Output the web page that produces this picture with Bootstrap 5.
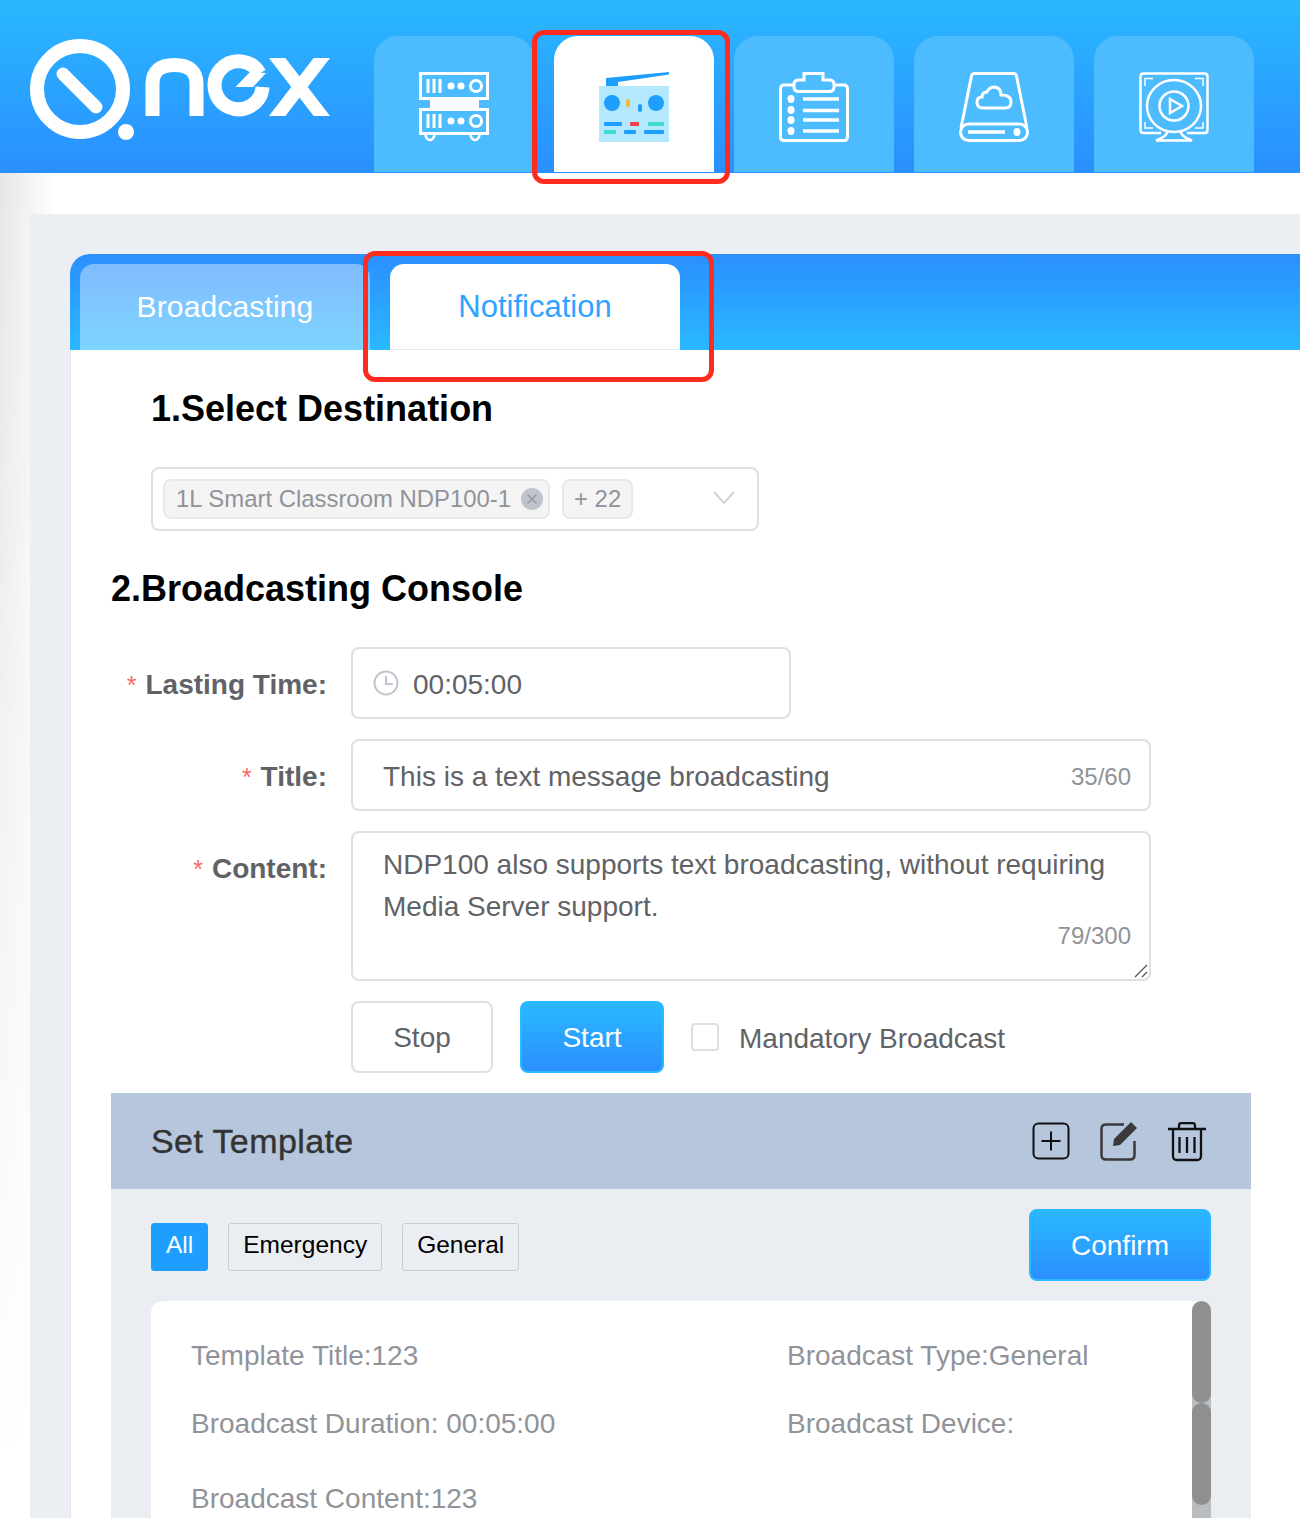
<!DOCTYPE html>
<html lang="en">
<head>
<meta charset="utf-8">
<title>Q-NEX Notification</title>
<link href="https://cdn.jsdelivr.net/npm/bootstrap@5.3.0/dist/css/bootstrap.min.css" rel="stylesheet">
<style>
html,body{height:1518px;overflow:hidden}
body{font-family:"Liberation Sans",Arial,sans-serif;background:#fff;color:#606266}
.top-bar{height:173px;background:linear-gradient(#2ab8ff,#2a8fff);padding-left:30px;position:relative}
.logo-svg{width:300px;height:106px;margin-top:39px;flex:none}
.mod-tabs{margin-left:44px;gap:20px;padding-top:36px}
.mod-tab{width:160px;height:136px;background:#4dbcff;border-radius:24px 24px 0 0;display:flex;justify-content:center;padding-top:36px}
.mod-tab.on{background:#fff}
.mod-tab svg{width:70px;height:70px}
.red-box{position:absolute;border:5px solid #fe2b1f;border-radius:12px;pointer-events:none;z-index:5}
.rb-a{left:532px;top:30px;width:198px;height:154px}
.rb-b{left:363px;top:251px;width:351px;height:131px}
.page-back{height:1345px;padding:41px 0 0 30px;position:relative;background:linear-gradient(rgba(255,255,255,0),#fff 95%),linear-gradient(90deg,#e6e6e6,#fff 55px)}
.panel{background:#ebeef3;height:1400px;padding:40px 0 0 40px;width:1400px}
.sheet{background:#fff;border-left:1px solid #e4e7ed;height:1300px;border-top-left-radius:20px}
.sheet-head{height:96px;margin-left:-1px;background:linear-gradient(#2a8fff,#2ab8ff);border-top-left-radius:20px;padding:10px 0 0 10px;gap:20px}
.sheet-tab{width:290px;height:86px;border-radius:14px 14px 0 0;line-height:86px;text-align:center}
.sheet-tab.off{background:linear-gradient(#80bbff,#7ed4ff);color:#fff;font-size:30px;letter-spacing:.15px}
.sheet-tab.on{background:#fff;color:#2ea3ff;border-bottom:1px solid #e4e7ed;font-size:31px}
.sec-head{font-weight:700;font-size:36px;line-height:44px;color:#000;margin:0}
.sec-one{padding:37px 0 0 80px}
.sel-box{width:608px;height:64px;border:2px solid #dcdfe6;border-radius:8px;margin:36px 0 0 0;padding:0 10px;gap:12px;position:relative}
.pick{height:40px;background:#f4f4f5;border:2px solid #e9e9eb;border-radius:8px;font-size:23.900px;color:#909399;padding:0 5px 0 11px;gap:10px;white-space:nowrap}
.pick-more{padding:0 10px}
.pick-x{width:22px;height:22px}
.chev{position:absolute;right:22px;top:22px;width:22px;height:14px}
.sec-two{padding:36px 0 0 40px}
.form-line{display:flex;margin-top:20px}
.form-first{margin-top:36px}
.line-lab{width:216px;height:72px;font-size:28px;font-weight:700;color:#606266;text-align:right;line-height:76px;white-space:nowrap}
.line-lab i{color:#f56c6c;font-style:normal;font-weight:400;margin-right:9px;font-size:25px}
.field{margin-left:24px;height:72px;border:2px solid #dcdfe6;border-radius:8px;font-size:28px;color:#606266;position:relative;background:#fff;white-space:nowrap}
.f-time{width:440px;padding:3px 0 0 20px;gap:14px}
.f-time svg{margin-top:-3px}
.f-title{width:800px;padding:3px 0 0 30px}
.f-body{width:800px;height:150px;padding:11px 20px 0 30px;line-height:42px;white-space:normal}
.count{position:absolute;right:18px;color:#909399;font-size:24px;line-height:28px}
.cnt-a{top:22px}
.cnt-b{top:89px}
.grip{position:absolute;right:1px;bottom:1px;width:14px;height:14px}
.act-row{margin:20px 0 0 240px;height:72px}
.act-btn{height:72px;border-radius:8px;font-size:28px;padding:2px 0 0;display:flex;align-items:center;justify-content:center}
.act-stop{width:142px;background:#fff;border:2px solid #dcdfe6;color:#606266}
.act-start{width:144px;margin-left:27px;background:linear-gradient(#2ab8ff,#2a8fff);border:2px solid #2ab8ff;color:#fff}
.tick{width:28px;height:28px;border:2px solid #dcdfe6;border-radius:4px;margin:0 20px 0 27px;background:#fff}
.tick-lab{font-size:28px;color:#606266;padding-top:3px}
.tpl{width:1140px;margin-top:20px;background:#eaedf2;height:500px}
.tpl-head{height:96px;background:#b6c7dd;padding:0 45px 0 40px}
.tpl-name{font-size:34px;letter-spacing:.4px;color:#333;-webkit-text-stroke:.4px #333}
.tpl-ico{gap:30px;padding-top:2px}
.tpl-ico svg{width:38px;height:40px;display:block}
.tpl-bar{padding:20px 40px 0;height:112px;align-items:flex-start}
.chip{height:48px;margin-top:14px;margin-right:20px;padding:0 14px 4px;border:1px solid #ccc;background:transparent;color:#000;border-radius:3px;font-size:24.500px;display:flex;align-items:center}
.chip.on{background:#1e9fff;border-color:#1e9fff;color:#fff}
.conf{width:182px;height:72px;margin-left:auto;border-radius:8px;background:linear-gradient(#2ab8ff,#2a8fff);border:2px solid #2ab8ff;color:#fff;font-size:28px;padding:2px 0 0}
.tpl-card{margin:0 40px;background:#fff;border-radius:12px;height:300px;position:relative;padding:35px 40px 0;color:#909399;font-size:28px}
.tpl-grid{display:grid;grid-template-columns:596px 1fr;row-gap:28px;line-height:40px;white-space:nowrap}
.tpl-wide{grid-column:1/3;margin-top:7px}
.rail{position:absolute;right:0;top:0;bottom:0;width:19px;background:linear-gradient(transparent 90px,#b9bdc0 90px)}
.thumb{height:102px;background:#8f8f8f;border-radius:10px}
</style>
</head>
<body>
<header class="top-bar d-flex">
  <svg class="logo-svg" viewBox="0 39 300 106" role="img" aria-label="Q-NEX logo">
    <defs><clipPath id="xc"><rect x="265" y="58" width="70" height="58"/></clipPath></defs>
    <g transform="translate(-30,0)" fill="none" stroke="#fff">
      <circle cx="80" cy="89" r="43" stroke-width="14"/>
      <line x1="63" y1="74" x2="96" y2="107" stroke-width="13" stroke-linecap="round"/>
      <circle cx="126" cy="132" r="8" fill="#fff" stroke="none"/>
      <path d="M152.500 116V84Q152.500 65 174.500 65Q196.500 65 196.500 84V116" stroke-width="14"/>
      <path d="M259.500 73.500A24 24 0 1 0 262.500 87" stroke-width="14"/>
      <path d="M235.500 87L250 72L266 73L253 87Z" fill="#fff" stroke="none"/>
      <g clip-path="url(#xc)" stroke-width="13"><line x1="271" y1="50" x2="328" y2="124"/><line x1="328" y1="50" x2="271" y2="124"/></g>
    </g>
  </svg>
  <nav class="mod-tabs d-flex">
    <div class="mod-tab">
      <svg viewBox="0 0 70 70" fill="none" stroke="#fff" stroke-width="3"><rect x="1.500" y="1.500" width="67" height="25"/><rect x="1.500" y="37.500" width="67" height="24"/><rect x="11" y="26" width="49" height="11" fill="#fff" stroke="none"/><path d="M9 7v14M15 7v14M21 7v14M9 42v14M15 42v14M21 42v14"/><circle cx="32" cy="14" r="3.500" fill="#fff" stroke="none"/><circle cx="42" cy="14" r="3.500" fill="#fff" stroke="none"/><circle cx="57" cy="14" r="5.500"/><circle cx="32" cy="49" r="3.500" fill="#fff" stroke="none"/><circle cx="42" cy="49" r="3.500" fill="#fff" stroke="none"/><circle cx="57" cy="49" r="5.500"/><path d="M6.500 62a4.500 6 0 0 0 9 0M51.500 62a4.500 6 0 0 0 9 0" stroke-width="2.500"/></svg>
    </div>
    <div class="mod-tab on">
      <svg viewBox="0 0 70 70"><path d="M7 6L70 0V2.500L19 10V14H7Z" fill="#1e9fff"/><rect y="14" width="70" height="56" fill="#b3e8ff"/><circle cx="13" cy="31" r="8" fill="#1e9fff"/><circle cx="57" cy="31" r="8" fill="#1e9fff"/><rect x="27" y="27" width="4" height="8" rx="2" fill="#f3b73c"/><rect x="39" y="32" width="4" height="8" rx="2" fill="#1e9fff"/><rect x="5" y="50" width="18" height="4" rx="1" fill="#1e9fff"/><rect x="31" y="50" width="9" height="4" rx="1" fill="#f0404a"/><rect x="49" y="50" width="16" height="4" rx="1" fill="#3fdcd0"/><rect x="5" y="58" width="12" height="4" rx="1" fill="#3fdcd0"/><rect x="25" y="58" width="12" height="4" rx="1" fill="#1e9fff"/><rect x="45" y="58" width="20" height="4" rx="1" fill="#1e9fff"/></svg>
    </div>
    <div class="mod-tab">
      <svg viewBox="0 0 70 70" fill="none" stroke="#fff" stroke-width="3"><path d="M15 13H5Q1.500 13 1.500 17V65Q1.500 68.500 5 68.500H65Q68.500 68.500 68.500 65V17Q68.500 13 65 13H55"/><path d="M25 1.500H44V8H50Q55 8 55 12V15Q55 19.500 50 19.500H20Q15 19.500 15 15V12Q15 8 20 8H25Z"/><path d="M24 27H60M24 38.500H60M24 48H60M24 59H60" stroke-width="3.500"/><g fill="#fff" stroke="none"><ellipse cx="12" cy="27" rx="3.500" ry="4"/><ellipse cx="12" cy="38" rx="3.500" ry="4"/><ellipse cx="12" cy="48" rx="3.500" ry="4"/><ellipse cx="12" cy="59" rx="3.500" ry="4"/></g></svg>
    </div>
    <div class="mod-tab">
      <svg viewBox="0 0 70 70" fill="none" stroke="#fff" stroke-width="3"><path d="M2 56L12.500 4Q13 1.500 15.500 1.500H54.500Q57 1.500 57.500 4L68 56"/><rect x="1.500" y="52" width="67" height="16.500" rx="8.200"/><path d="M9 60H46" stroke-width="3.500"/><ellipse cx="58" cy="60" rx="3.500" ry="4" fill="#fff" stroke="none"/><path d="M24 36Q18 36 18 30Q18 25 23 25Q23 20 28 20Q30 15 36 15Q42 16 42 23Q52 23 52 30Q52 36 46 36Z"/></svg>
    </div>
    <div class="mod-tab">
      <svg viewBox="0 0 70 70" fill="none" stroke="#fff" stroke-width="2.500"><path d="M22 61H4.500Q1.500 61 1.500 58V4.500Q1.500 1.500 4.500 1.500H65.500Q68.500 1.500 68.500 4.500V58Q68.500 61 65.500 61H48"/><path d="M6 14V6.500H14M56 6.500H64V14M6 50V56H14M56 56H64V50" stroke-width="1.500"/><ellipse cx="35" cy="34" rx="27" ry="26"/><circle cx="35" cy="34" r="14.500"/><path d="M31 27L43 34L31 41Z"/><path d="M28 59Q29 64 17 68.500H53Q41 64 42 59"/></svg>
    </div>
  </nav>
</header>
<div class="red-box rb-a"></div>
<div class="red-box rb-b"></div>
<div class="page-back">
  <main class="panel">
    <section class="sheet">
      <div class="sheet-head d-flex">
        <div class="sheet-tab off">Broadcasting</div>
        <div class="sheet-tab on">Notification</div>
      </div>
      <div class="sec-one">
        <h2 class="sec-head">1.Select Destination</h2>
        <div class="sel-box d-flex align-items-center">
          <span class="pick d-flex align-items-center">1L Smart Classroom NDP100-1
            <svg class="pick-x" viewBox="0 0 22 22"><circle cx="11" cy="11" r="11" fill="#c0c4cc"/><path d="M6.500 6.500L15.500 15.500M15.500 6.500L6.500 15.500" stroke="#909399" stroke-width="1.200"/></svg>
          </span>
          <span class="pick pick-more d-flex align-items-center">+ 22</span>
          <svg class="chev" viewBox="0 0 22 14" fill="none" stroke="#c0c4cc" stroke-width="1.500"><path d="M1 1L11 12L21 1"/></svg>
        </div>
      </div>
      <div class="sec-two">
        <h2 class="sec-head">2.Broadcasting Console</h2>
        <div class="form-line form-first">
          <div class="line-lab"><i>*</i>Lasting Time:</div>
          <div class="field f-time d-flex align-items-center">
            <svg width="26" height="26" viewBox="0 0 26 26" fill="none" stroke="#c0c4cc" stroke-width="2"><circle cx="13" cy="13" r="11.500"/><path d="M13 6V14H20"/></svg>
            <span>00:05:00</span>
          </div>
        </div>
        <div class="form-line">
          <div class="line-lab"><i>*</i>Title:</div>
          <div class="field f-title d-flex align-items-center">
            This is a text message broadcasting
            <span class="count cnt-a">35/60</span>
          </div>
        </div>
        <div class="form-line">
          <div class="line-lab"><i>*</i>Content:</div>
          <div class="field f-body">
            NDP100 also supports text broadcasting, without requiring Media Server support.
            <span class="count cnt-b">79/300</span>
            <svg class="grip" viewBox="0 0 14 14" stroke="#555" stroke-width="1.300"><path d="M1 13L13 1M8 13L13 8"/></svg>
          </div>
        </div>
        <div class="act-row d-flex align-items-center">
          <button type="button" class="btn act-btn act-stop">Stop</button>
          <button type="button" class="btn act-btn act-start">Start</button>
          <span class="tick"></span>
          <span class="tick-lab">Mandatory Broadcast</span>
        </div>
        <div class="tpl">
          <div class="tpl-head d-flex align-items-center justify-content-between">
            <span class="tpl-name">Set Template</span>
            <div class="tpl-ico d-flex align-items-center">
              <svg viewBox="0 0 38 40" fill="none" stroke="#111" stroke-width="2"><rect x="1.500" y="1.500" width="35" height="35" rx="5"/><path d="M19 9.500V28.500M9.500 19H28.500"/></svg>
              <svg viewBox="0 0 38 40" fill="none"><path d="M24 2.500H6Q1.500 2.500 1.500 7V33Q1.500 37.500 6 37.500H30Q34.500 37.500 34.500 33V19" stroke="#3a3a3a" stroke-width="2.500"/><path d="M31 0L37 6L20 23L13 24L14 17Z" fill="#3a3a3a"/></svg>
              <svg viewBox="0 0 38 40" fill="none" stroke="#111" stroke-width="2.300"><path d="M0 7H38M5 7V34Q5 38 9 38H29Q33 38 33 34V7M11 7V3.500Q11 1 13.500 1H24.500Q27 1 27 3.500V7M11.500 15V31M19 15V31M26.500 15V31"/></svg>
            </div>
          </div>
          <div class="tpl-bar d-flex">
            <button type="button" class="btn chip on">All</button>
            <button type="button" class="btn chip">Emergency</button>
            <button type="button" class="btn chip">General</button>
            <button type="button" class="btn conf">Confirm</button>
          </div>
          <div class="tpl-card">
            <div class="tpl-grid">
              <span>Template Title:123</span><span>Broadcast Type:General</span>
              <span>Broadcast Duration: 00:05:00</span><span>Broadcast Device:</span>
              <span class="tpl-wide">Broadcast Content:123</span>
            </div>
            <div class="rail"><div class="thumb"></div><div class="thumb"></div></div>
          </div>
        </div>
      </div>
    </section>
  </main>
</div>
</body>
</html>
